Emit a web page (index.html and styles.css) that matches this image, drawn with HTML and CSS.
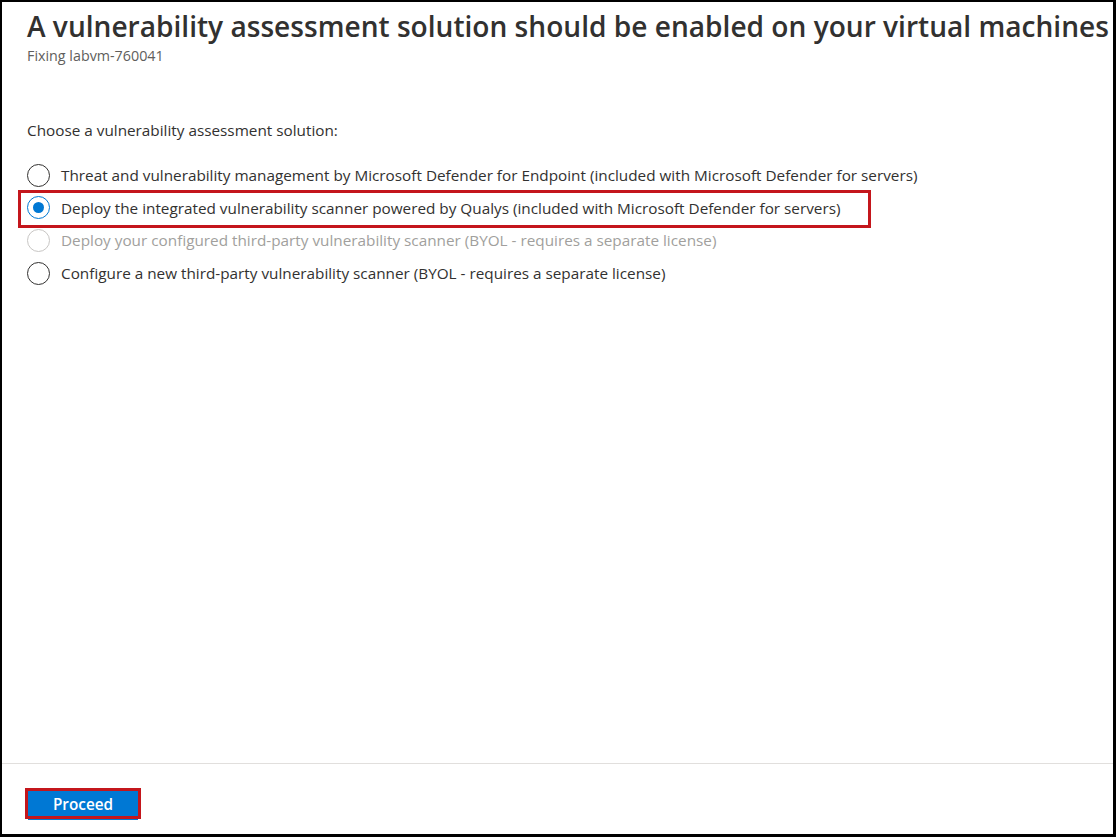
FILE: index.html
```html
<!DOCTYPE html>
<html>
<head>
<meta charset="utf-8">
<link rel="stylesheet" href="styles.css">
</head>
<body>
<div class="frame">
  <header class="head">
    <h1 class="title">A vulnerability assessment solution should be enabled on your virtual machines</h1>
    <div class="sub">Fixing labvm-760041</div>
  </header>
  <main class="content">
    <p class="prompt">Choose a vulnerability assessment solution:</p>
    <div class="options">
      <div class="opt"><span class="radio"></span><span class="label">Threat and vulnerability management by Microsoft Defender for Endpoint (included with Microsoft Defender for servers)</span></div>
      <div class="opt highlight"><span class="radio checked"></span><span class="label">Deploy the integrated vulnerability scanner powered by Qualys (included with Microsoft Defender for servers)</span></div>
      <div class="opt disabled"><span class="radio"></span><span class="label">Deploy your configured third-party vulnerability scanner (BYOL - requires a separate license)</span></div>
      <div class="opt"><span class="radio"></span><span class="label">Configure a new third-party vulnerability scanner (BYOL - requires a separate license)</span></div>
    </div>
  </main>
  <footer class="foot">
    <button class="proceed">Proceed</button>
  </footer>
</div>
</body>
</html>
```
FILE: styles.css
```css
* { box-sizing: border-box; }
html, body { margin: 0; padding: 0; background: #fff; }
body { font-family: "Open Sans", "Noto Sans", sans-serif; color: #323130; }
.frame {
  width: 1116px;
  height: 837px;
  border-style: solid;
  border-color: #000;
  border-width: 2px 3px 3px 2px;
  display: flex;
  flex-direction: column;
  background: #fff;
}
.head { padding: 6px 0 0 25px; }
.title {
  margin: 0;
  font-size: 28.1px;
  font-weight: 600;
  line-height: 36px;
  color: #323130;
  white-space: nowrap;
}
.sub { font-size: 14.3px; color: #605e5c; line-height: 18px; margin-top: 3px; }
.content { flex: 1; padding: 55px 0 0 25px; }
.prompt { margin: 0 0 19px; font-size: 15.3px; line-height: 20px; }
.options { display: flex; flex-direction: column; }
.opt {
  display: flex;
  align-items: center;
  gap: 11px;
  height: 32.6px;
  font-size: 15.3px;
  width: fit-content;
  position: relative;
  white-space: nowrap;
}
.radio {
  width: 23px;
  height: 23px;
  border: 1.5px solid #323130;
  border-radius: 50%;
  flex: none;
  position: relative;
}
.radio.checked { border-color: #0078d4; }
.radio.checked::after {
  content: "";
  position: absolute;
  left: 4.5px; top: 4.5px;
  width: 11px; height: 11px;
  border-radius: 50%;
  background: #0078d4;
}
.opt.disabled { color: #a19f9d; }
.opt.disabled .radio { border-color: #c8c6c4; }
.highlight::before {
  content: "";
  position: absolute;
  left: -9px; right: -30px; top: -2px; bottom: -4px;
  border: 3px solid #c4161c;
}
.foot {
  border-top: 1px solid #e1dfdd;
  height: 71px;
  padding: 24px 0 0 23px;
}
.proceed {
  width: 116px;
  height: 31px;
  background: #0078d4;
  color: #fff;
  border: 3px solid #c4161c;
  box-shadow: 0 4px 0 -3px #0078d4;
  font-family: inherit;
  font-size: 15.3px;
  font-weight: 600;
  padding: 0;
}
```
